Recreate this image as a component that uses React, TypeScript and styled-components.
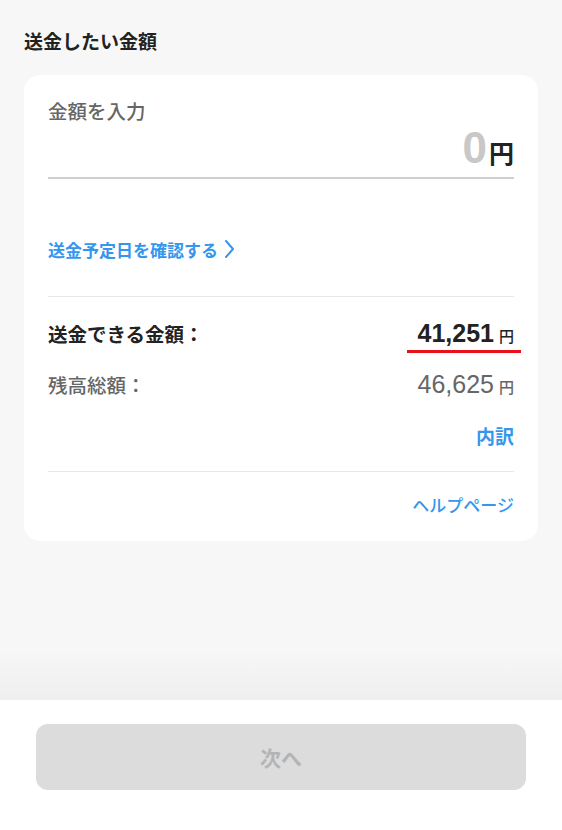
import React from "react";
import styled, { createGlobalStyle } from "styled-components";

const Global = createGlobalStyle`
  html, body { margin: 0; padding: 0; background: #f7f7f7; }
  body { font-family: "Noto Sans CJK JP", "Noto Sans", sans-serif; -webkit-font-smoothing: antialiased; }
  * { box-sizing: border-box; }
`;

const Page = styled.div`
  min-height: 830px;
  display: flex;
  flex-direction: column;
  background: #f7f7f7;
`;

const Content = styled.main`
  padding: 26px 24px 0;
  flex: 1;
`;

const Title = styled.h2`
  margin: 0;
  font-size: 19px;
  line-height: 30px;
  font-weight: 700;
  color: #222;
`;

const Card = styled.section`
  margin-top: 19px;
  background: #fff;
  border-radius: 16px;
  padding: 22px 24px 5px;
`;

const InputLabel = styled.div`
  font-size: 19.5px;
  line-height: 28px;
  color: #666;
  font-weight: 500;
`;

const AmountField = styled.div`
  display: flex;
  justify-content: flex-end;
  align-items: baseline;
  height: 54px;
  border-bottom: 2px solid #cfcfcf;
  padding-top: 1px;
`;

const Zero = styled.span`
  font-family: "Liberation Sans", Arial, sans-serif;
  font-weight: 700;
  font-size: 44px;
  line-height: 44px;
  color: #c8c8c8;
`;

const Yen = styled.span<{ $size: number; $color?: string; $weight?: number; $gap?: number }>`
  font-size: ${(p) => p.$size}px;
  font-weight: ${(p) => p.$weight ?? 700};
  color: ${(p) => p.$color ?? "#222"};
  margin-left: ${(p) => p.$gap ?? 2}px;
`;

const ScheduleLink = styled.a`
  display: flex;
  align-items: center;
  gap: 6px;
  margin-top: 55px;
  height: 30px;
  font-size: 17px;
  font-weight: 700;
  color: #3596ee;
  text-decoration: none;
`;

const Divider = styled.hr`
  border: none;
  border-top: 1px solid #e8e8e8;
  margin: 0;
`;

const TopDivider = styled(Divider)`
  margin-top: 32px;
`;

const Row = styled.div<{ $h: number }>`
  display: flex;
  justify-content: space-between;
  align-items: center;
  height: ${(p) => p.$h}px;
`;

const RowLabel = styled.span<{ $strong?: boolean }>`
  font-size: 19.5px;
  font-weight: ${(p) => (p.$strong ? 700 : 500)};
  color: ${(p) => (p.$strong ? "#222" : "#666")};
`;

const Value = styled.span`
  position: relative;
  display: inline-flex;
  align-items: baseline;
`;

const Num = styled.span<{ $strong?: boolean }>`
  font-family: "Liberation Sans", Arial, sans-serif;
  font-size: 25px;
  font-weight: ${(p) => (p.$strong ? 700 : 400)};
  color: ${(p) => (p.$strong ? "#222" : "#666")};
`;

const Marker = styled.span`
  position: absolute;
  left: -11px;
  right: -7px;
  bottom: -5px;
  height: 3px;
  background: #e8101a;
`;

const RightLink = styled.a<{ $weight: number }>`
  display: flex;
  justify-content: flex-end;
  align-items: center;
  font-weight: ${(p) => p.$weight};
  color: #3596ee;
  text-decoration: none;
`;

const BreakdownRow = styled(RightLink)`
  height: 72px;
  font-size: 19px;
`;

const HelpRow = styled(RightLink)`
  height: 64px;
  font-size: 17px;
`;

const Footer = styled.footer`
  position: relative;
  background: #fff;
  height: 130px;
  padding: 24px 36px 0;
  &::before {
    content: "";
    position: absolute;
    left: 0;
    right: 0;
    top: -50px;
    height: 50px;
    background: linear-gradient(to bottom, rgba(0, 0, 0, 0), rgba(0, 0, 0, 0.035));
    pointer-events: none;
  }
`;

const NextButton = styled.button`
  width: 100%;
  height: 66px;
  border: none;
  border-radius: 12px;
  background: #dcdcdc;
  color: #b4b4b4;
  font-family: "Noto Sans CJK JP", sans-serif;
  font-size: 21px;
  font-weight: 700;
`;

const Chevron = () => (
  <svg width="11" height="20" viewBox="0 0 11 20" fill="none">
    <path d="M2 2l7 8-7 8" stroke="#3596ee" strokeWidth="2" strokeLinecap="round" strokeLinejoin="round" />
  </svg>
);

export default function App() {
  return (
    <Page>
      <Global />
      <Content>
        <Title>送金したい金額</Title>
        <Card>
          <InputLabel>金額を入力</InputLabel>
          <AmountField>
            <Zero>0</Zero>
            <Yen $size={25}>円</Yen>
          </AmountField>
          <ScheduleLink href="#">
            送金予定日を確認する
            <Chevron />
          </ScheduleLink>
          <TopDivider />
          <Row $h={72}>
            <RowLabel $strong>送金できる金額：</RowLabel>
            <Value>
              <Num $strong>41,251</Num>
              <Yen $size={15} $weight={500} $gap={5}>円</Yen>
              <Marker />
            </Value>
          </Row>
          <Row $h={30}>
            <RowLabel>残高総額：</RowLabel>
            <Value>
              <Num>46,625</Num>
              <Yen $size={15} $weight={500} $gap={5} $color="#666">円</Yen>
            </Value>
          </Row>
          <BreakdownRow href="#" $weight={700}>内訳</BreakdownRow>
          <Divider />
          <HelpRow href="#" $weight={500}>ヘルプページ</HelpRow>
        </Card>
      </Content>
      <Footer>
        <NextButton disabled>次へ</NextButton>
      </Footer>
    </Page>
  );
}
